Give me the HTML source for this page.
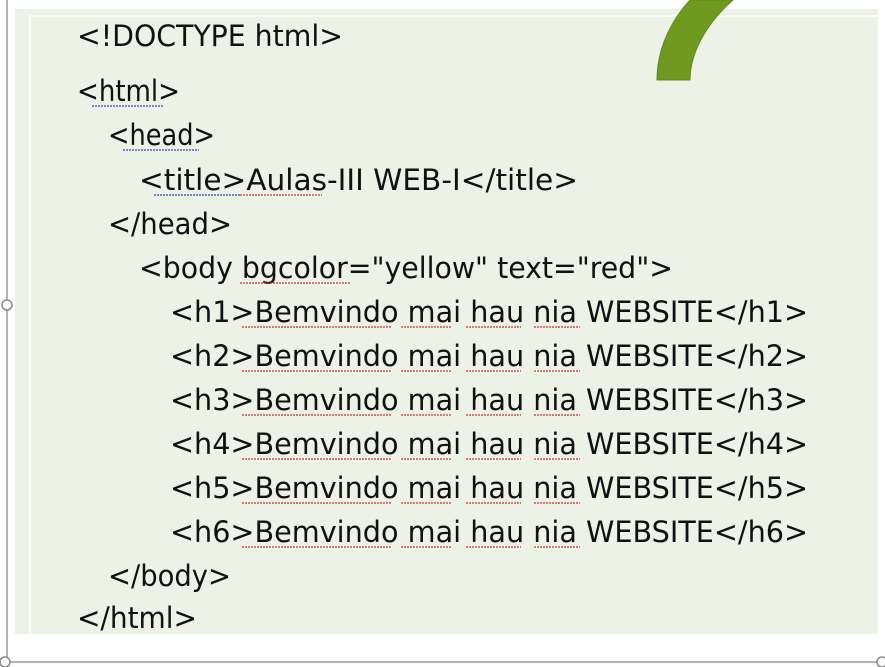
<!DOCTYPE html>
<html><head><style>
html,body{margin:0;padding:0;background:#fff;width:885px;height:667px;overflow:hidden}
</style></head><body>
<svg width="885" height="667" viewBox="0 0 885 667" xmlns="http://www.w3.org/2000/svg" style="position:absolute;left:0;top:0">
<rect x="15" y="9" width="863" height="625" fill="#edf2e6"/>
<line x1="30" y1="16" x2="878" y2="16" stroke="#fafcf7" stroke-width="2"/>
<line x1="30" y1="16" x2="30" y2="634" stroke="#fafcf7" stroke-width="2"/>
<path d="M657,80 C657,50 670,22 690,0 L733,0 C710,20 690,50 690,80 Z" fill="#6f9a1f" stroke="#5e8a18" stroke-width="1"/>
<line x1="7" y1="0" x2="7" y2="662" stroke="#9a9a9a" stroke-width="1.5"/>
<line x1="7" y1="662" x2="885" y2="662" stroke="#9a9a9a" stroke-width="1.5"/>
<circle cx="7" cy="305" r="5" fill="#fff" stroke="#8a8a8a" stroke-width="1.5"/>
<circle cx="5" cy="662" r="5" fill="#fff" stroke="#8a8a8a" stroke-width="1.5"/>
<circle cx="882" cy="662" r="5" fill="#fff" stroke="#8a8a8a" stroke-width="1.5"/>
<g font-family="DejaVu Sans Condensed, DejaVu Sans, sans-serif" font-size="29" fill="#111">
<text x="77" y="46" textLength="266" lengthAdjust="spacingAndGlyphs">&lt;!DOCTYPE html&gt;</text>
<text x="77" y="101" textLength="103" lengthAdjust="spacingAndGlyphs">&lt;html&gt;</text>
<text x="108" y="145" textLength="107" lengthAdjust="spacingAndGlyphs">&lt;head&gt;</text>
<text x="139" y="190" textLength="439" lengthAdjust="spacingAndGlyphs">&lt;title&gt;Aulas-III WEB-I&lt;/title&gt;</text>
<text x="108" y="234" textLength="124" lengthAdjust="spacingAndGlyphs">&lt;/head&gt;</text>
<text x="139" y="278" textLength="534" lengthAdjust="spacingAndGlyphs">&lt;body bgcolor="yellow" text="red"&gt;</text>
<text x="170" y="322" textLength="638" lengthAdjust="spacingAndGlyphs">&lt;h1&gt;Bemvindo mai hau nia WEBSITE&lt;/h1&gt;</text>
<text x="170" y="366" textLength="638" lengthAdjust="spacingAndGlyphs">&lt;h2&gt;Bemvindo mai hau nia WEBSITE&lt;/h2&gt;</text>
<text x="170" y="410" textLength="638" lengthAdjust="spacingAndGlyphs">&lt;h3&gt;Bemvindo mai hau nia WEBSITE&lt;/h3&gt;</text>
<text x="170" y="454" textLength="638" lengthAdjust="spacingAndGlyphs">&lt;h4&gt;Bemvindo mai hau nia WEBSITE&lt;/h4&gt;</text>
<text x="170" y="498" textLength="638" lengthAdjust="spacingAndGlyphs">&lt;h5&gt;Bemvindo mai hau nia WEBSITE&lt;/h5&gt;</text>
<text x="170" y="542" textLength="638" lengthAdjust="spacingAndGlyphs">&lt;h6&gt;Bemvindo mai hau nia WEBSITE&lt;/h6&gt;</text>
<text x="108" y="586" textLength="123" lengthAdjust="spacingAndGlyphs">&lt;/body&gt;</text>
<text x="77" y="628" textLength="120" lengthAdjust="spacingAndGlyphs">&lt;/html&gt;</text>
</g>
<g stroke-width="1.2" fill="none" stroke-dasharray="2 1">
<line x1="92" y1="106" x2="164" y2="106" stroke="#3344bb"/>
<line x1="123" y1="150" x2="199" y2="150" stroke="#3344bb"/>
<line x1="154" y1="195" x2="240" y2="195" stroke="#3344bb"/>
<line x1="240" y1="195" x2="322" y2="195" stroke="#d03030"/>
<line x1="240" y1="283" x2="350" y2="283" stroke="#d03030"/>
<g stroke="#d03030">
<line x1="242" y1="327" x2="392" y2="327"/><line x1="401" y1="327" x2="452" y2="327"/><line x1="466" y1="327" x2="521" y2="327"/><line x1="534" y1="327" x2="580" y2="327"/>
<line x1="242" y1="371" x2="392" y2="371"/><line x1="401" y1="371" x2="452" y2="371"/><line x1="466" y1="371" x2="521" y2="371"/><line x1="534" y1="371" x2="580" y2="371"/>
<line x1="242" y1="415" x2="392" y2="415"/><line x1="401" y1="415" x2="452" y2="415"/><line x1="466" y1="415" x2="521" y2="415"/><line x1="534" y1="415" x2="580" y2="415"/>
<line x1="242" y1="459" x2="392" y2="459"/><line x1="401" y1="459" x2="452" y2="459"/><line x1="466" y1="459" x2="521" y2="459"/><line x1="534" y1="459" x2="580" y2="459"/>
<line x1="242" y1="503" x2="392" y2="503"/><line x1="401" y1="503" x2="452" y2="503"/><line x1="466" y1="503" x2="521" y2="503"/><line x1="534" y1="503" x2="580" y2="503"/>
<line x1="242" y1="547" x2="392" y2="547"/><line x1="401" y1="547" x2="452" y2="547"/><line x1="466" y1="547" x2="521" y2="547"/><line x1="534" y1="547" x2="580" y2="547"/>
</g>
</g>
</svg>
</body></html>
